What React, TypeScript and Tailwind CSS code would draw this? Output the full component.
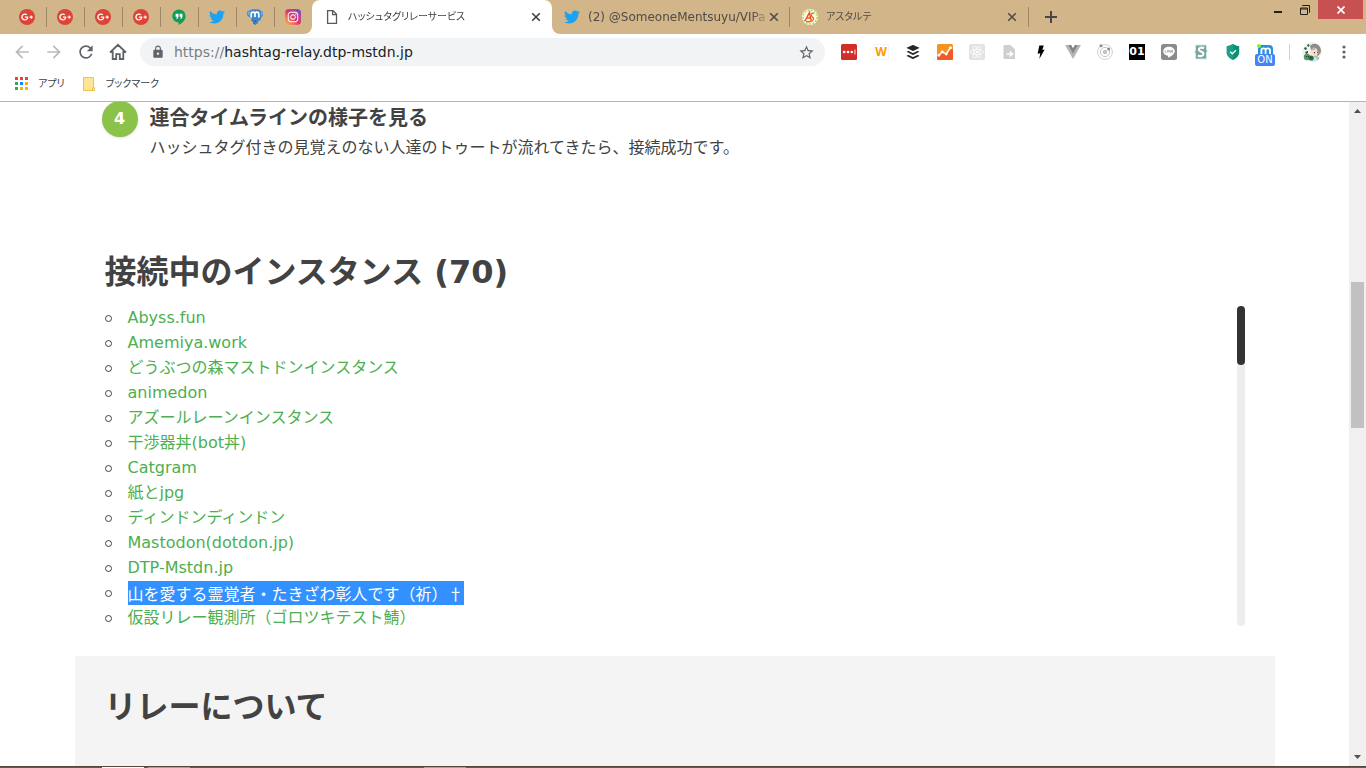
import React from "react";
import type { ReactNode } from "react";
import { FaBuffer, FaGooglePlusG, FaInstagram, FaReact, FaTwitter } from "react-icons/fa";
import { MdArrowBack, MdArrowForward, MdLock, MdRefresh, MdStarBorder } from "react-icons/md";

function GooglePlus() {
  return (
    <span className="flex size-4 items-center justify-center rounded-full bg-[#db4437] text-white">
      <FaGooglePlusG className="size-3" />
    </span>
  );
}

function Hangouts() {
  return (
    <svg viewBox="0 0 16 16" className="size-4">
      <path d="M8 .4a6.6 6.6 0 0 0-.4 13.2V16c3.600-1.700 7-4.900 7-9A6.600 6.600 0 0 0 8 .4z" fill="#0f9d58" />
      <path d="M4.600 4.800h2.900v3L6.500 9.700H5.200l.8-1.900H4.600zM8.600 4.800h2.900v3l-1 1.900H9.200l.8-1.900H8.600z" fill="#fff" />
    </svg>
  );
}

function MastodonElephant() {
  return (
    <svg viewBox="0 0 18 18" className="size-[18px]">
      <path d="M1 3.500 4.500 2l2-.8h6l2 1.300 2.300 1.300.2 4-1.600 1.200-1 3.300-2 .7-.7 2.500-2.500 1-2-.8.3-2.200-2.300-.5.2-2.800-2.700-1.500L1 7z" fill="#3a88cf" />
      <path d="M1.500 3.800 4 3l-.5 4.500-1.800-.8zM15 3l1.800 1-.3 3-1.500.8z" fill="#6aaee6" />
      <path d="m6 12.500 2.200 1-.3 2.200 1.500.8M10 12l-.5 2" fill="none" stroke="#1f5f9c" strokeWidth=".9" />
      <path d="M5.200 9.500V6q0-1.800 1.900-1.800T9 6v3M9 6q0-1.800 1.900-1.800T12.800 6v3.500" fill="none" stroke="#fff" strokeWidth="1.700" />
    </svg>
  );
}

function Instagram() {
  return (
    <span className="flex size-4 items-center justify-center rounded bg-linear-to-tr from-[#fdb83c] via-[#e1306c] to-[#6a3fd0] text-white">
      <FaInstagram className="size-3" />
    </span>
  );
}

function BlankPage() {
  return (
    <svg viewBox="0 0 16 16" className="size-4" fill="none" stroke="#5a5a5a" strokeWidth="1.300">
      <path d="M3.600 1.700h5.400l3.500 3.500v9.100H3.600zM8.600 1.700v4h4" />
    </svg>
  );
}

function AstarteLogo() {
  return (
    <svg viewBox="0 0 16 16" className="size-4">
      <circle cx="8" cy="8" r="8" fill="#fffbe9" />
      <circle cx="8" cy="8" r="6.900" fill="none" stroke="#a8dc6c" strokeWidth="1.600" strokeDasharray="2 1.300" />
      <path d="m3 12 4.500-8.500 1.700 8.300M4.500 9h4.200" fill="none" stroke="#f4511e" strokeWidth="1.500" />
      <path d="M12 4.800C10 3 8 5.500 9.800 7.200s2.700 2.900.5 4.600-4.300.8-6.300.6" fill="none" stroke="#f0642b" strokeWidth="1.300" />
    </svg>
  );
}

function CloseGlyph() {
  return (
    <svg viewBox="0 0 10 10" className="size-2.5" stroke="currentColor" strokeWidth="1.600">
      <path d="m1.200 1.200 7.600 7.600M8.800 1.200 1.200 8.800" />
    </svg>
  );
}

const pinned = [
  { label: "Google+ 1", icon: <GooglePlus /> },
  { label: "Google+ 2", icon: <GooglePlus /> },
  { label: "Google+ 3", icon: <GooglePlus /> },
  { label: "Google+ 4", icon: <GooglePlus /> },
  { label: "Hangouts", icon: <Hangouts /> },
  { label: "Twitter", icon: <FaTwitter className="size-4 text-[#1da1f2]" /> },
  { label: "Mastodon", icon: <MastodonElephant /> },
  { label: "Instagram", icon: <Instagram /> },
];

function Tab({ icon, title, active, latin }: { icon: ReactNode; title: string; active?: boolean; latin?: boolean }) {
  const tone = active ? "w-60 rounded-t-lg bg-white text-[#3c4043]" : "w-[238px] text-[#4f4b46]";
  const size = latin ? "text-[12px]" : "text-[10px]";
  return (
    <div className={`flex h-full shrink items-center pr-2 pl-3 ${tone}`}>
      <span className="flex size-4 shrink-0 items-center">{icon}</span>
      <button className={`ml-2 min-w-0 flex-1 mask-r-from-90% text-left leading-4 whitespace-nowrap [font-feature-settings:'palt'] ${size}`}>
        {title}
      </button>
      <button aria-label={`${title} を閉じる`} className="-ml-1 flex size-4 shrink-0 items-center justify-center">
        <CloseGlyph />
      </button>
    </div>
  );
}

function TabStrip() {
  return (
    <div className="flex h-[34px] shrink-0 bg-[#d2b689]">
      <div className="flex pl-[9px]">
        {pinned.map((tab, i) => (
          <button key={tab.label} aria-label={tab.label} className="flex w-[38px] items-center">
            <span className="flex flex-1 justify-center pr-px">{tab.icon}</span>
            <span className={`h-5 w-px ${i < pinned.length - 1 ? "bg-[#9c8764]" : "bg-transparent"}`} />
          </button>
        ))}
      </div>
      <div className="-ml-[9px] flex min-w-0 items-center">
        <span className="h-full w-2 bg-white">
          <span className="block h-full rounded-br-lg bg-[#d2b689]" />
        </span>
        <Tab active icon={<BlankPage />} title="ハッシュタグリレーサービス" />
        <span className="-mr-2 h-full w-2 shrink-0 bg-white">
          <span className="block h-full rounded-bl-lg bg-[#d2b689]" />
        </span>
        <Tab latin icon={<FaTwitter className="size-4 text-[#1da1f2]" />} title="(2) @SomeoneMentsuyu/VIPa" />
        <span className="-ml-px h-5 w-px shrink-0 bg-[#9c8764]" />
        <Tab icon={<AstarteLogo />} title="アスタルテ" />
        <span className="h-5 w-px shrink-0 bg-[#9c8764]" />
        <button aria-label="新しいタブ" className="ml-3.5 shrink-0 text-[#46474a]">
          <svg viewBox="0 0 16 16" className="size-4" stroke="currentColor" strokeWidth="2">
            <path d="M8 2v12M2 8h12" />
          </svg>
        </button>
      </div>
      <div className="ml-auto flex h-[19px] shrink-0 pr-[3px] text-[#1f1f1f]">
        <button aria-label="最小化" className="flex w-7 items-end justify-center pb-1.5">
          <span className="h-0.5 w-2 bg-[#1f1f1f]" />
        </button>
        <button aria-label="元に戻す" className="flex w-[26px] items-center justify-center">
          <svg viewBox="0 0 10 10" className="size-2.5" fill="none" stroke="currentColor">
            <path d="M2.500 1V.5h7v7H9M.5 3h7v6.500h-7zM.5 4h7" />
          </svg>
        </button>
        <button aria-label="ウィンドウを閉じる" className="flex w-[45px] items-center justify-center bg-[#c75050] text-white">
          <svg viewBox="0 0 8 8" className="size-2" stroke="currentColor" strokeWidth="1.700">
            <path d="m.5.5 7 7M7.500.5l-7 7" />
          </svg>
        </button>
      </div>
    </div>
  );
}

const extensions: { label: string; icon: ReactNode }[] = [
  {
    label: "LastPass",
    icon: (
      <svg viewBox="0 0 16 16" className="size-4">
        <rect width="16" height="16" rx="1.500" fill="#d32d27" />
        <g fill="#fff">
          <circle cx="3.200" cy="8" r="1.300" />
          <circle cx="7" cy="8" r="1.300" />
          <circle cx="10.800" cy="8" r="1.300" />
          <path d="M13.500 5.500h.9v5h-.9z" />
        </g>
      </svg>
    ),
  },
  {
    label: "Weblio",
    icon: <span className="flex size-4 items-center justify-center border border-[#f4f4f4] font-['Noto_Sans',sans-serif] text-[12px] leading-4 font-bold text-[#ff9a00]">W</span>,
  },
  { label: "Buffer", icon: <FaBuffer className="size-4 text-[#23282d]" /> },
  {
    label: "Analytics",
    icon: (
      <svg viewBox="0 0 16 16" className="size-4">
        <rect width="16" height="16" rx="1.500" fill="#f79421" />
        <path d="m0 13 5-4.500L9 10l5-6.500L16 6v8.500q0 1.500-1.500 1.500h-13Q0 16 0 14.500z" fill="#f35b24" />
        <path d="m1.800 11.300 3.400-3.400 4 2.300 4-6.200" fill="none" stroke="#fff" strokeWidth="1.500" />
        <g fill="#fff">
          <circle cx="1.900" cy="11.300" r="1.400" />
          <circle cx="5.200" cy="7.900" r="1.400" />
          <circle cx="9.200" cy="10" r="1.400" />
          <circle cx="13.500" cy="3.700" r="1.500" />
        </g>
      </svg>
    ),
  },
  {
    label: "React",
    icon: (
      <span className="flex size-4 items-center justify-center rounded-xs bg-[#e2e2e2] text-white">
        <FaReact className="size-3.5" />
      </span>
    ),
  },
  {
    label: "Send",
    icon: (
      <svg viewBox="0 0 16 16" className="size-4">
        <path d="M3.500 1h6L14 5.500V15H3.500q-1 0-1-1V2q0-1 1-1z" fill="#cfcfcf" />
        <path d="M5.500 10h5.500M8.800 7.500l2.700 2.500-2.700 2.500" fill="none" stroke="#fff" strokeWidth="1.600" />
      </svg>
    ),
  },
  {
    label: "AMP",
    icon: (
      <svg viewBox="0 0 16 16" className="size-4">
        <path d="M6.300 1.500h4.500L9.300 6l2.400-.5L6.300 15l1-5.800-2.700.6z" fill="#000" />
      </svg>
    ),
  },
  {
    label: "Vue",
    icon: (
      <svg viewBox="0 0 16 16" className="size-4">
        <path d="M0 1h4l4 7 4-7h4L8 15z" fill="#b5b5b5" />
        <path d="M3.200 1h3L8 4.200 9.800 1h3L8 9.500z" fill="#858585" />
      </svg>
    ),
  },
  {
    label: "Orbit",
    icon: (
      <svg viewBox="0 0 16 16" className="size-4" fill="none" stroke="#c4c4c4">
        <circle cx="8" cy="8" r="7.400" strokeWidth=".8" />
        <circle cx="8" cy="8" r="4.600" />
        <circle cx="8" cy="8" r="2.300" fill="#c4c4c4" stroke="none" />
        <circle cx="4" cy="1.700" r="1.500" fill="#8d8d8d" stroke="none" />
        <circle cx="11.700" cy="5" r="1.500" fill="#8d8d8d" stroke="none" />
      </svg>
    ),
  },
  {
    label: "Counter",
    icon: <span className="flex size-4 items-center justify-center bg-black text-[11px] leading-4 font-bold text-white">01</span>,
  },
  {
    label: "LINE",
    icon: (
      <svg viewBox="0 0 16 16" className="size-4">
        <rect width="16" height="16" rx="2.500" fill="#8a8a8a" />
        <path d="M8 2.700c-3.300 0-5.800 2-5.800 4.600 0 2.300 2 4.200 5 4.500v2c2.900-1.300 6.600-3.600 6.600-6.500 0-2.600-2.500-4.600-5.800-4.600z" fill="#fff" />
        <path d="M4.200 6v2.500h1.200M6.500 6v2.500M7.700 8.500V6l1.700 2.500V6M12 6.200h-1.300v2.100H12M10.700 7.200H12" fill="none" stroke="#8a8a8a" strokeWidth=".6" />
      </svg>
    ),
  },
  {
    label: "Stylus",
    icon: (
      <svg viewBox="0 0 16 16" className="size-4">
        <path d="M2.500 1h11v4.500l.8 1.500-.8 1.500V15h-11V9.500L1.700 8l.8-2z" fill="#7fa39e" stroke="#c8f0ea" />
        <path d="M11 4.300Q9.300 3.300 7.600 3.700C5.300 4.200 5.500 6.500 7.300 7.200l1.800.8c1.900.9 1.700 3.500-.6 4q-2 .4-3.700-.7" fill="none" stroke="#fff" strokeWidth="2.200" />
      </svg>
    ),
  },
  {
    label: "Shield",
    icon: (
      <svg viewBox="0 0 16 16" className="size-4">
        <path d="M8 0q3 1.900 6.200 2.200v7.300Q13 13.500 8 16 3 13.500 1.800 9.500V2.200Q5 1.900 8 0z" fill="#0b8f77" />
        <path d="M8 0Q5 1.900 1.800 2.200v7.300Q3 13.500 8 16z" fill="#1ba088" />
        <path d="m5.200 7.800 2.100 2 3.600-3.500" fill="none" stroke="#fff" strokeWidth="1.300" />
      </svg>
    ),
  },
];

function Toolbar() {
  return (
    <div className="flex h-9 shrink-0 items-center bg-white text-[#5f6368]">
      <div className="flex gap-3 px-3">
        <button aria-label="戻る" className="text-[#b8babc]"><MdArrowBack className="size-5" /></button>
        <button aria-label="進む" className="text-[#b8babc]"><MdArrowForward className="size-5" /></button>
        <button aria-label="再読み込み"><MdRefresh className="size-5" /></button>
        <button aria-label="ホーム">
          <svg viewBox="0 0 20 20" className="size-5" fill="none" stroke="currentColor" strokeWidth="1.800">
            <path d="m2 10.500 8-7.700 8 7.700M4.700 9v8h3.500v-4.800h3.600V17h3.500V9" />
          </svg>
        </button>
      </div>
      <div className="flex h-7 min-w-0 flex-1 items-center rounded-full bg-[#f1f3f4] pr-2.5 pl-[11px]">
        <MdLock className="size-3.5 shrink-0" />
        <label className="relative ml-[9px] flex min-w-0 flex-1 text-[14px] leading-5">
          <input aria-label="アドレス" defaultValue="https://hashtag-relay.dtp-mstdn.jp" className="w-full bg-transparent text-transparent outline-none" />
          <span className="pointer-events-none absolute inset-0 text-[#7a7e83]">
            https://<span className="text-[#202124]">hashtag-relay.dtp-mstdn.jp</span>
          </span>
        </label>
        <button aria-label="ブックマークに追加"><MdStarBorder className="size-[17px]" /></button>
      </div>
      <div className="ml-4 flex shrink-0 items-center gap-4">
        {extensions.map((ext) => (
          <button key={ext.label} aria-label={ext.label} className="size-4">{ext.icon}</button>
        ))}
        <button aria-label="Mastodon" className="relative size-4">
          <svg viewBox="0 0 16 16" className="size-4">
            <path d="M1 16V4q0-3 3-3h8q4 0 4 4v11z" fill="#2b90d9" />
            <path d="M4.400 10V6.200q0-1.900 2.100-1.900t2.100 1.900V10M8.600 6.200q0-1.900 2.200-1.900T13 6.200V10" fill="none" stroke="#fff" strokeWidth="1.800" />
            <circle cx="2" cy="2" r="2" fill="#79f23c" />
          </svg>
          <span className="absolute top-2.5 -left-0.5 flex h-3 w-5 items-center justify-center rounded-xs bg-[#4285f4] text-[10px] leading-3 text-white">ON</span>
        </button>
      </div>
      <span className="ml-4 h-4 w-px bg-[#d0d0d0]" />
      <button aria-label="プロフィール" className="ml-3">
        <svg viewBox="0 0 20 20" className="size-5">
          <circle cx="10" cy="10" r="10" fill="#f0f2ee" />
          <path d="M8 4Q11 0 16 2.800 20 6 18.500 11L16 14l-6-3z" fill="#8c8c8a" />
          <path d="M9.500 7.500 14 6l2.500 4-2 4-4-.5-2-3z" fill="#f6dccb" />
          <path d="M8.500 8 12 4.500l1.500 3.500M12 13.500l4 1 1.500 2.500-4.500 2.500z" fill="#b8b6b4" />
          <path d="m9 14 4 1 3 3q-3 2-6 2z" fill="#bfeef0" />
          <circle cx="5" cy="15" r="3.200" fill="#4d9a63" />
          <circle cx="9.200" cy="16" r="2.600" fill="#2f6e49" />
          <path d="m2 6 2-1 1 2-2 1zM3 10l3-1v2l-2 1zM5 3l2-1 .5 2L6 5z" fill="#28583f" />
          <path d="M4 14h1v1H4zM6 14h1v1H6zM8.500 15h1v1h-1zM12 10h1v1.300h-1zM15 9.500h.8v1.300H15z" fill="#33251f" />
        </svg>
      </button>
      <button aria-label="メニュー" className="mr-3.5 ml-3.5">
        <svg viewBox="0 0 16 16" className="size-4" fill="currentColor">
          <circle cx="8" cy="3" r="1.600" />
          <circle cx="8" cy="8" r="1.600" />
          <circle cx="8" cy="13" r="1.600" />
        </svg>
      </button>
    </div>
  );
}

const appColors = [
  "fill-[#ea4335]", "fill-[#ea4335]", "fill-[#ea4335]",
  "fill-[#34a853]", "fill-[#1a87f0]", "fill-[#fbb005]",
  "fill-[#34a853]", "fill-[#fbb005]", "fill-[#fbb005]",
];

function BookmarkBar() {
  return (
    <div className="flex h-8 shrink-0 items-center border-b border-[#b4b4b4] bg-white pb-1 pl-[15px] text-[10px] leading-4 text-[#3c4043] [font-feature-settings:'palt']">
      <button className="flex items-center gap-2.5">
        <svg viewBox="0 0 13 13" className="size-[13px]">
          {appColors.map((fill, i) => (
            <rect key={i} x={(i % 3) * 5} y={Math.floor(i / 3) * 5} width="3" height="3" className={fill} />
          ))}
        </svg>
        アプリ
      </button>
      <button className="ml-[17px] flex items-center gap-2.5">
        <svg viewBox="0 0 14 16" className="h-4 w-3.5">
          <path d="M1.500 1.500h10v10h1v3h-11z" fill="#ffe493" stroke="#eac54f" />
          <path d="M10.500 14.500v-3" stroke="#eac54f" />
        </svg>
        ブックマーク
      </button>
    </div>
  );
}

const instances = [
  "Abyss.fun",
  "Amemiya.work",
  "どうぶつの森マストドンインスタンス",
  "animedon",
  "アズールレーンインスタンス",
  "干渉器丼(bot丼)",
  "Catgram",
  "紙とjpg",
  "ディンドンディンドン",
  "Mastodon(dotdon.jp)",
  "DTP-Mstdn.jp",
  "山を愛する霊覚者・たきざわ彰人です（祈）†",
  "仮設リレー観測所（ゴロツキテスト鯖）",
];
const selected = 11;

function Page() {
  return (
    <main className="min-w-0 flex-1 overflow-hidden bg-white text-[#424242]">
      <div className="mx-auto max-w-[1200px]">
        <section className="-mt-px flex pl-[27px]">
          <span className="flex size-9 shrink-0 items-center justify-center rounded-full bg-[#8bc34a] text-base font-bold text-white shadow">4</span>
          <div className="ml-3 pt-px">
            <h3 className="text-xl leading-8 font-bold">連合タイムラインの様子を見る</h3>
            <p className="text-base leading-7">ハッシュタグ付きの見覚えのない人達のトゥートが流れてきたら、接続成功です。</p>
          </div>
        </section>
        <section className="px-[30px] pt-[86px] pb-[30px]">
          <h2 className="text-[32px] leading-[48px] font-bold">接続中のインスタンス (70)</h2>
          <div className="mt-2.5 flex h-80">
            <ul className="h-full flex-1 overflow-hidden">
              {instances.map((name, i) => (
                <li key={name} className="flex h-[25px] items-start text-base leading-6">
                  <span className="mt-[9px] mr-4 size-[7px] shrink-0 rounded-full border border-[#424242]" />
                  <a
                    href="#"
                    className={i === selected ? "bg-[#3390ff] font-['Noto_Sans_CJK_JP',sans-serif] text-white" : "text-[#4caf50]"}
                  >
                    {name}
                  </a>
                </li>
              ))}
            </ul>
            <div className="h-full w-2 rounded-full bg-[#eee]">
              <div className="h-[59px] rounded-full bg-[#333]" />
            </div>
          </div>
        </section>
        <section className="h-80 bg-[#f4f4f4] px-[30px] pt-[27px]">
          <h2 className="text-[32px] leading-[48px] font-bold">リレーについて</h2>
        </section>
      </div>
    </main>
  );
}

function PageScrollbar() {
  return (
    <div className="flex w-[17px] shrink-0 flex-col items-center bg-[#f0f0f0]">
      <svg viewBox="0 0 17 17" className="size-[17px]"><path d="m5 11 3.500-4 3.500 4z" fill="#505050" /></svg>
      <div className="w-full flex-[163_1_0%]" />
      <div className="h-[146px] w-[13px] shrink-0 bg-[#c1c1c1]" />
      <div className="w-full flex-[321_1_0%]" />
      <svg viewBox="0 0 17 17" className="size-[17px]"><path d="m5 6 3.500 4L12 6z" fill="#505050" /></svg>
    </div>
  );
}

export default function App() {
  return (
    <div lang="ja" className="flex h-screen flex-col overflow-hidden bg-white font-['DejaVu_Sans','Noto_Sans_CJK_JP',sans-serif]">
      <TabStrip />
      <Toolbar />
      <BookmarkBar />
      <div className="flex min-h-0 flex-1">
        <Page />
        <PageScrollbar />
      </div>
      <div className="flex h-0.5 shrink-0 border-t border-[#54483a] bg-[#6b5a3e]">
        <span className="ml-[102px] w-[42px] bg-white" />
        <span className="ml-1 w-[42px] bg-[#a89f90]" />
        <span className="ml-[234px] w-[42px] bg-[#a89f90]" />
      </div>
    </div>
  );
}
